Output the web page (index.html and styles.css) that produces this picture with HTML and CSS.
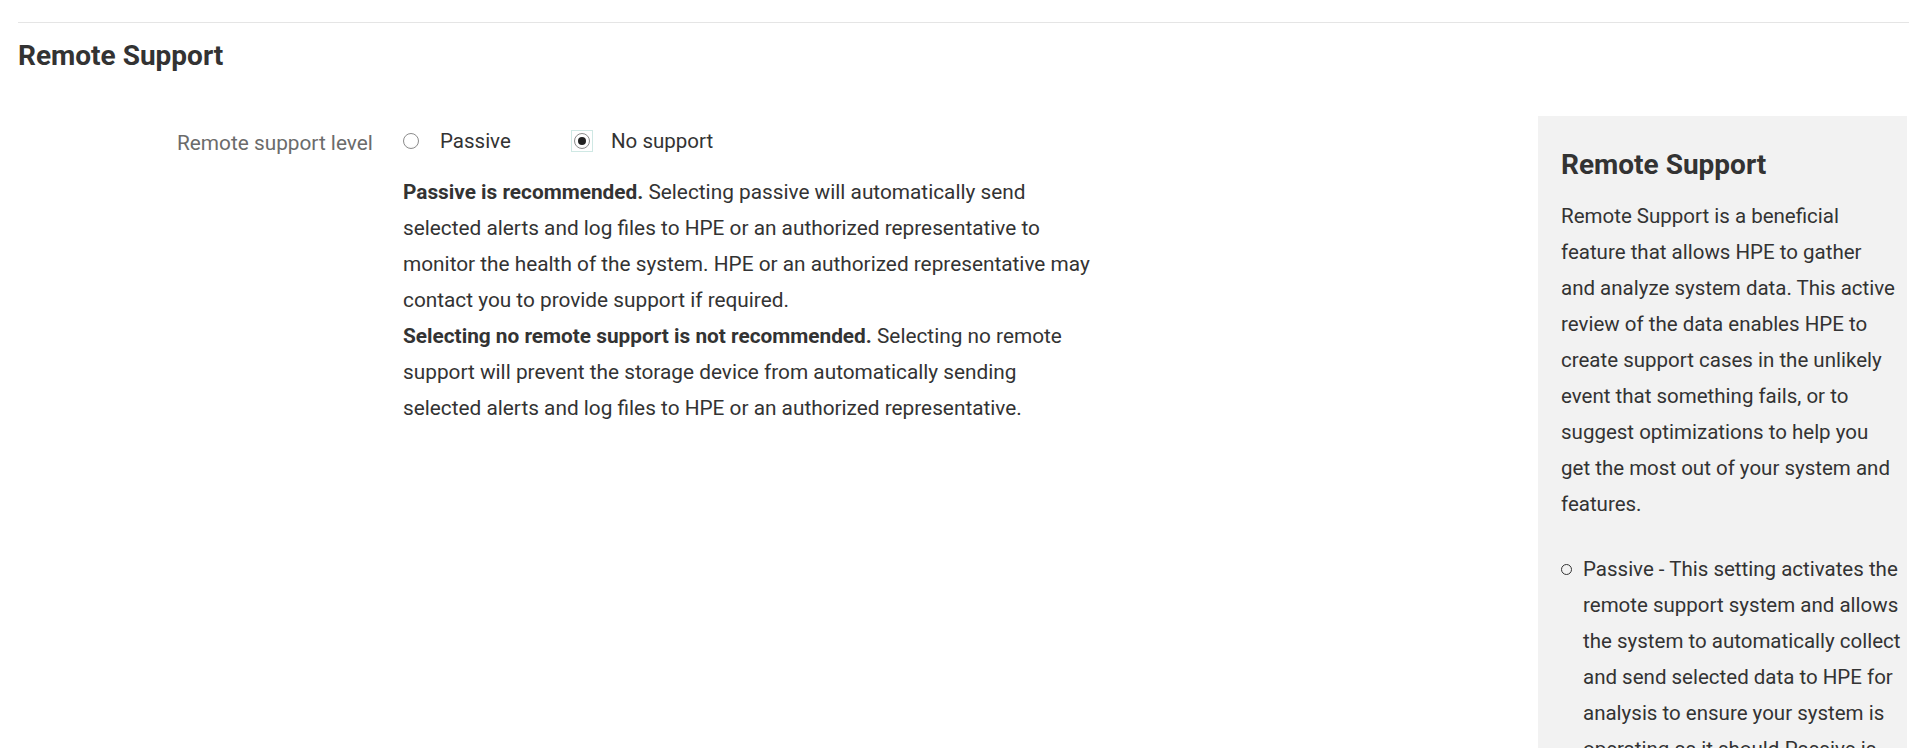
FILE: index.html
```html
<!DOCTYPE html>
<html lang="en">
<head>
  <meta charset="UTF-8">
  <title>Remote Support</title>
  <link rel="stylesheet" href="styles.css">
</head>
<body>
  <div class="page">
    <hr class="rule">
    <h1 class="title">Remote Support</h1>

    <div class="layout">
      <!-- Formular -->
      <main class="form">
        <div class="field">
          <div class="field-label">Remote support level</div>
          <div class="field-body">
            <div class="radios">
              <label class="option">
                <span class="radio"></span>
                <span>Passive</span>
              </label>
              <label class="option">
                <span class="radio-focus"><span class="radio checked"></span></span>
                <span>No support</span>
              </label>
            </div>
            <div class="help">
              <p><strong>Passive is recommended.</strong> Selecting passive will automatically send selected alerts and log files to HPE or an authorized representative to monitor the health of the system. HPE or an authorized representative may contact you to provide support if required.</p>
              <p><strong>Selecting no remote support is not recommended.</strong> Selecting no remote support will prevent the storage device from automatically sending selected alerts and log files to HPE or an authorized representative.</p>
            </div>
          </div>
        </div>
      </main>

      <!-- Hilfe-Seitenleiste -->
      <aside class="info">
        <h2>Remote Support</h2>
        <p>Remote Support is a beneficial feature that allows HPE to gather and&nbsp;analyze system data. This active review of the data enables HPE to create support cases in the unlikely event that something fails, or to suggest optimizations to help you get&nbsp;the most out of your system and features.</p>
        <ul>
          <li>Passive - This setting activates the remote support system and allows the system to automatically collect and send selected data to HPE for analysis to ensure your system is operating as it should.Passive is recommended.</li>
          <li>No support - Selecting no remote support will prevent the storage device from sending data to HPE.</li>
        </ul>
      </aside>
    </div>
  </div>
</body>
</html>
```

FILE: styles.css
```css
html, body {
  margin: 0;
  height: 100%;
  overflow: hidden;
}
body {
  font-family: Roboto, "Liberation Sans", sans-serif;
  background: #fff;
  color: #333;
}
.page {
  height: 100%;
  display: flex;
  flex-direction: column;
}
.rule {
  border: none;
  border-top: 1px solid #e5e5e5;
  margin: 22px 0 0 18px;
  height: 0;
}
.title {
  font-size: 28px;
  line-height: 32px;
  font-weight: 700;
  color: #333;
  margin: 17px 0 0 18px;
}
.layout {
  flex: 1;
  min-height: 0;
  display: flex;
  margin-top: 44px;
}
.form {
  flex: 1;
  padding-left: 177px;
}
.field {
  display: flex;
  margin-top: 7px;
}
.field-label {
  width: 226px;
  font-size: 20.8px;
  line-height: 40px;
  color: #6b6b6b;
}
.field-body {
  width: 692px;
}
.radios {
  display: flex;
  height: 36px;
}
.option {
  width: 171px;
  display: flex;
  align-items: center;
  gap: 21px;
  font-size: 20.5px;
  color: #333;
}
.radio {
  width: 16px;
  height: 16px;
  border: 1px solid #8c8c8c;
  border-radius: 50%;
  box-sizing: border-box;
  background: radial-gradient(circle at 50% 40%, #fff 55%, #eee 100%);
  display: flex;
  align-items: center;
  justify-content: center;
  flex-shrink: 0;
}
.radio-focus {
  width: 22px;
  height: 22px;
  box-sizing: border-box;
  border: 1px solid #cfe8e4;
  display: flex;
  align-items: center;
  justify-content: center;
  margin-left: -3px;
  margin-right: -3px;
}
.radio.checked::after {
  content: "";
  width: 8px;
  height: 8px;
  border-radius: 50%;
  background: #222;
}
.help {
  margin-top: 15px;
  font-size: 20.8px;
  line-height: 36px;
}
.help p {
  margin: 0;
}
.help strong {
  font-weight: 700;
}
.info {
  width: 369px;
  margin-right: 2px;
  background: #f2f2f2;
  box-sizing: border-box;
  padding: 33px 2px 0 23px;
  overflow: hidden;
}
.info h2 {
  font-size: 28px;
  line-height: 32px;
  font-weight: 700;
  margin: 0 0 17px;
}
.info p {
  font-size: 20.5px;
  line-height: 36px;
  margin: 0 0 29px;
}
.info ul {
  margin: 0;
  padding-left: 22px;
  list-style: none;
  font-size: 20.5px;
  line-height: 36px;
}
.info li {
  position: relative;
}
.info li::before {
  content: "";
  position: absolute;
  left: -22px;
  top: 13px;
  width: 9px;
  height: 9px;
  border: 1px solid #333;
  border-radius: 50%;
}
```
